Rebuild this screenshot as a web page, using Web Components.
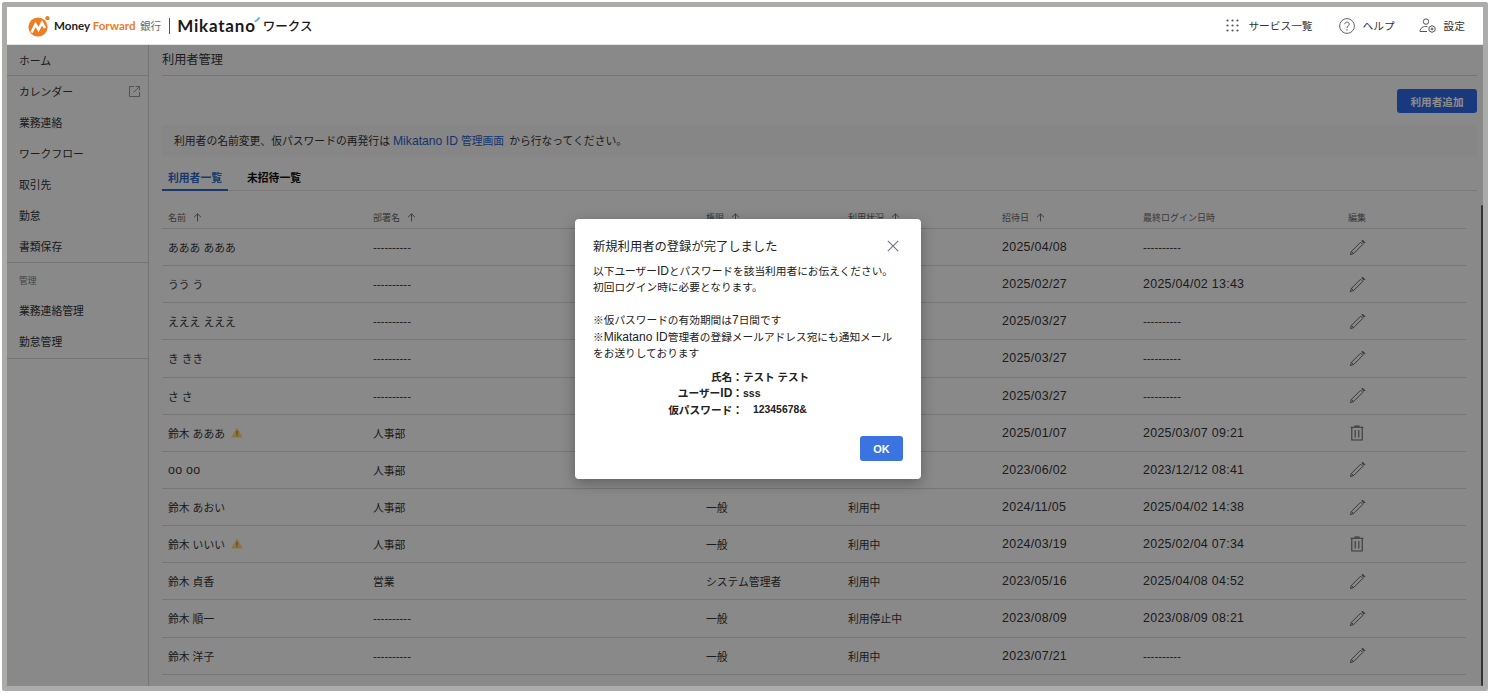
<!DOCTYPE html>
<html lang="ja">
<head>
<meta charset="utf-8">
<title>利用者管理</title>
<style>
  html, body { margin: 0; height: 100%; background: #fff; overflow: hidden; }
  body { font-family: "Liberation Sans", "Noto Sans CJK JP", sans-serif; font-size: 10.8px; color: #333; }
</style>
</head>
<body>
<app-frame>
  <app-header slot="header"></app-header>
  <side-nav slot="nav">
    <nav-group><nav-item>ホーム</nav-item></nav-group>
    <nav-group>
      <nav-item external>カレンダー</nav-item>
      <nav-item>業務連絡</nav-item>
      <nav-item>ワークフロー</nav-item>
      <nav-item>取引先</nav-item>
      <nav-item>勤怠</nav-item>
      <nav-item>書類保存</nav-item>
    </nav-group>
    <nav-group label="管理">
      <nav-item>業務連絡管理</nav-item>
      <nav-item>勤怠管理</nav-item>
    </nav-group>
  </side-nav>
  <users-page slot="main">
    <user-table>
      <user-row name="あああ あああ" dept="----------" invited="2025/04/08" login="----------"></user-row>
      <user-row name="うう う" dept="----------" invited="2025/02/27" login="2025/04/02 13:43"></user-row>
      <user-row name="えええ えええ" dept="----------" invited="2025/03/27" login="----------"></user-row>
      <user-row name="き きき" dept="----------" invited="2025/03/27" login="----------"></user-row>
      <user-row name="さ さ" dept="----------" invited="2025/03/27" login="----------"></user-row>
      <user-row name="鈴木 あああ" warn dept="人事部" invited="2025/01/07" login="2025/03/07 09:21" action="delete"></user-row>
      <user-row name="oo oo" dept="人事部" invited="2023/06/02" login="2023/12/12 08:41"></user-row>
      <user-row name="鈴木 あおい" dept="人事部" role="一般" status="利用中" invited="2024/11/05" login="2025/04/02 14:38"></user-row>
      <user-row name="鈴木 いいい" warn dept="人事部" role="一般" status="利用中" invited="2024/03/19" login="2025/02/04 07:34" action="delete"></user-row>
      <user-row name="鈴木 貞香" dept="営業" role="システム管理者" status="利用中" invited="2023/05/16" login="2025/04/08 04:52"></user-row>
      <user-row name="鈴木 順一" dept="----------" role="一般" status="利用停止中" invited="2023/08/09" login="2023/08/09 08:21"></user-row>
      <user-row name="鈴木 洋子" dept="----------" role="一般" status="利用中" invited="2023/07/21" login="----------"></user-row>
    </user-table>
  </users-page>
  <done-dialog slot="dialog"></done-dialog>
</app-frame>

<script>
// outer grey frame, header on top, everything below it sits under the backdrop
class AppFrame extends HTMLElement {
  constructor() {
    super()
    this.attachShadow({ mode: 'open' })
    this.shadowRoot.innerHTML = `
      <style>
        :host { display: block; box-sizing: border-box; width: 1486px; height: 689px; margin: 2px 0 0 2px;
                border: 5px solid #ababa9; border-radius: 2px; background: #fafafa; }
        .app { position: relative; display: flex; flex-direction: column; height: 100%; overflow: hidden; }
        .body { flex: 1; display: flex; min-height: 0; position: relative; }
        .backdrop { position: absolute; inset: 0; background: rgba(0, 0, 0, .45); }
      </style>
      <div class="app">
        <slot name="header"></slot>
        <div class="body">
          <slot name="nav"></slot>
          <slot name="main"></slot>
          <div class="backdrop"></div>
          <slot name="dialog"></slot>
        </div>
      </div>`
  }
}

class AppHeader extends HTMLElement {
  constructor() {
    super()
    this.attachShadow({ mode: 'open' })
    this.shadowRoot.innerHTML = `
      <style>
        :host { display: flex; align-items: center; box-sizing: border-box; height: 38px; background: #fff;
                border-bottom: 1px solid #e4e4e4; padding: 0 18px 0 21px; flex: none; }
        .logo { display: flex; align-items: center; flex: 1; }
        .mf { margin-left: 4px; font: 700 11.6px "Lato", "Liberation Sans", sans-serif; color: #222; white-space: nowrap; width: 82px; }
        .mf b { color: #ee7c22; font-weight: 700; }
        .bank { margin-left: 4px; color: #666; font-size: 10.6px; }
        .sep { width: 1px; height: 16px; background: #555; margin: 0 8px 0 8px; }
        .mika { font: 700 17px "Lato", "Liberation Sans", sans-serif; letter-spacing: .8px; margin-left: -1px; color: #1a1a1a; }
        .tick { margin: -12px 0 0 -2px; }
        .works { margin-left: 3px; font-size: 12.5px; color: #1a1a1a; font-weight: 500; }
        .link { display: flex; align-items: center; margin-left: 26px; color: #333; font-size: 10.7px; }
        .link svg { display: block; margin-right: 9px; }
        .link.help svg { margin-right: 8px; }
        .link.conf { margin-left: 24px; }
      </style>
      <div class="logo">
        <svg width="22" height="22" viewBox="0 0 22 22">
          <circle cx="10" cy="12" r="9.6" fill="#ee7c22"/>
          <circle cx="19.4" cy="3.2" r="2.1" fill="#ee7c22"/>
          <path d="M3.5 17.5 L7.5 9.5 L10.5 14.5 L14 8 L17 13" fill="none" stroke="#fff" stroke-width="2.6"/>
        </svg>
        <span class="mf">Money <b>Forward</b></span>
        <span class="bank">銀行</span>
        <span class="sep"></span>
        <span class="mika">Mikatano</span>
        <svg class="tick" width="6" height="5" viewBox="0 0 6 5"><path d="M.5 4.5 C2.5 4 4 2.5 5.5 .5" fill="none" stroke="#3fb2e8" stroke-width="1.6"/></svg>
        <span class="works">ワークス</span>
      </div>
      <div class="link">
        <svg width="13" height="13" viewBox="0 0 13 13" fill="#555">
          <circle cx="1.5" cy="1.5" r="1.1"/><circle cx="6.5" cy="1.5" r="1.1"/><circle cx="11.5" cy="1.5" r="1.1"/>
          <circle cx="1.5" cy="6.5" r="1.1"/><circle cx="6.5" cy="6.5" r="1.1"/><circle cx="11.5" cy="6.5" r="1.1"/>
          <circle cx="1.5" cy="11.5" r="1.1"/><circle cx="6.5" cy="11.5" r="1.1"/><circle cx="11.5" cy="11.5" r="1.1"/>
        </svg>
        <span>サービス一覧</span>
      </div>
      <div class="link help">
        <svg width="16" height="16" viewBox="0 0 16 16" fill="none" stroke="#555">
          <circle cx="8" cy="8" r="7.4" stroke-width=".9"/>
          <path d="M5.8 6.2 C5.8 3.4 10.2 3.4 10.2 6.2 C10.2 8 8 8 8 10" stroke-width="1"/>
          <circle cx="8" cy="12" r=".7" fill="#555" stroke="none"/>
        </svg>
        <span>ヘルプ</span>
      </div>
      <div class="link conf">
        <svg width="17" height="15" viewBox="0 0 17 15" fill="none" stroke="#555" stroke-width="1" style="margin-right:8px">
          <circle cx="7" cy="3.6" r="2.7"/>
          <path d="M8.5 8.6 C4 8 1 10 1 13.5 H8"/>
          <path d="M13 7.6 L16 9.3 V12.7 L13 14.4 L10 12.7 V9.3 Z"/>
          <circle cx="13" cy="11" r="1"/>
        </svg>
        <span>設定</span>
      </div>`
  }
}

class SideNav extends HTMLElement {
  constructor() {
    super()
    this.attachShadow({ mode: 'open' })
    this.shadowRoot.innerHTML = `
      <style>
        :host { display: block; box-sizing: border-box; width: 142px; flex: none; border-right: 1px solid #d4d4d4; }
      </style>
      <slot></slot>`
  }
}

class NavGroup extends HTMLElement {
  connectedCallback() {
    if (this.shadowRoot) return
    this.attachShadow({ mode: 'open' })
    const label = this.getAttribute('label')
    this.shadowRoot.innerHTML = `
      <style>
        :host { display: block; border-bottom: 1px solid #d4d4d4; }
        :host([label]) { padding-bottom: 1px; }
        .label { height: 32px; line-height: 36px; padding-left: 12px; font-size: 8.8px; color: #777; }
      </style>
      ${label ? `<div class="label">${label}</div>` : ''}
      <slot></slot>`
  }
}

class NavItem extends HTMLElement {
  connectedCallback() {
    if (this.shadowRoot) return
    this.attachShadow({ mode: 'open' })
    const ext = this.hasAttribute('external')
    this.shadowRoot.innerHTML = `
      <style>
        :host { display: flex; align-items: center; justify-content: space-between; height: 31px; box-sizing: border-box;
                padding: 0 8px 1px 12px; color: #333; }
        :host(:first-child:last-child) { height: 30px; padding-bottom: 0; }
        svg { display: block; }
      </style>
      <slot></slot>
      ${ext ? `<svg width="11" height="11" viewBox="0 0 11 11" fill="none" stroke="#8a8a8a" stroke-width=".9">
        <path d="M5 .5 H.5 V10.5 H10.5 V6 M6.5 .5 H10.5 V4.5 M10.3 .7 L4.5 6.5"/></svg>` : ''}`
  }
}

class UsersPage extends HTMLElement {
  constructor() {
    super()
    this.attachShadow({ mode: 'open' })
    this.shadowRoot.innerHTML = `
      <style>
        :host { display: block; flex: 1; min-width: 0; box-sizing: border-box; padding: 0 6px 0 13px; position: relative; overflow: hidden; }
        h1 { margin: 0; height: 31px; line-height: 31px; box-sizing: border-box; font-size: 12.2px; font-weight: 400;
             color: #333; border-bottom: 1px solid #d4d4d4; }
        .actions { display: flex; justify-content: flex-end; margin-top: 13px; }
        button { width: 80px; height: 24px; border: 0; border-radius: 3px; background: #2f69e5; color: #fff;
                 font: 700 10.6px "Liberation Sans", "Noto Sans CJK JP", sans-serif; padding: 0; }
        .notice { margin-top: 12px; height: 32px; line-height: 32px; padding-left: 12px; background: #f4f4f4; color: #333; border-radius: 2px; }
        .notice a { color: #2f5fc4; text-decoration: none; margin-right: 2px; }
        .l { font-size: 12.2px; }
        .tabs { display: flex; margin-top: 11px; height: 23px; box-sizing: border-box; border-bottom: 1px solid #dcdcdc; font-weight: 700; font-size: 10.8px; }
        .tab { padding: 0 6px; height: 23px; box-sizing: border-box; line-height: 20px; color: #111; margin-right: 6px; }
        .tab.on { width: 66px; color: #2f69c4; border-bottom: 2px solid #2f69c4; margin-right: 13px; }
        .thumb { position: absolute; right: 0; top: 160px; bottom: 0; width: 2px; background: #5e5e5e; border-radius: 1px; }
      </style>
      <h1>利用者管理</h1>
      <div class="actions"><button>利用者追加</button></div>
      <div class="notice">利用者の名前変更、仮パスワードの再発行は <a><span class="l">Mikatano ID</span> 管理画面</a> から行なってください。</div>
      <div class="tabs"><div class="tab on">利用者一覧</div><div class="tab">未招待一覧</div></div>
      <slot></slot>
      <div class="thumb"></div>`
  }
}

const COLS = '205px 333px 142px 154px 141px 205px 1fr'
const ARROW = `<svg width="9" height="9" viewBox="0 0 9 9" fill="none" stroke="#666" stroke-width=".9"><path d="M4.5 8.5 V1 M1 4.2 L4.5 .8 L8 4.2"/></svg>`

class UserTable extends HTMLElement {
  constructor() {
    super()
    this.attachShadow({ mode: 'open' })
    const head = ['名前', '部署名', '権限', '利用状況', '招待日']
      .map(t => `<span class="th">${t}${ARROW}</span>`).join('')
    this.shadowRoot.innerHTML = `
      <style>
        :host { display: block; margin-right: 11px; }
        .head { display: grid; grid-template-columns: ${COLS}; height: 38px; box-sizing: border-box; padding-top: 20px;
                border-bottom: 1px solid #d8d8d8; font-size: 9px; color: #666; }
        .th { display: flex; align-items: center; gap: 7px; height: 13px; padding-left: 6px; }
      </style>
      <div class="head">${head}<span class="th">最終ログイン日時</span><span class="th">編集</span></div>
      <slot></slot>`
  }
}

// latin runs come out wider in the reference than the CJK size gives
const widen = s => /^-+$/.test(s)
  ? `<span class="dash">${s}</span>`
  : s.replace(/[\x21-\x7e]+( [\x21-\x7e]+)*/g, m => `<span class="l">${m}</span>`)

class UserRow extends HTMLElement {
  connectedCallback() {
    if (this.shadowRoot) return
    this.attachShadow({ mode: 'open' })
    const a = n => widen(this.getAttribute(n) ?? '')
    const warn = this.hasAttribute('warn')
      ? `<svg class="warn" width="12" height="11" viewBox="0 0 12 11"><path d="M6 .3 L11.8 10.6 H.2 Z" fill="#ffd873"/><path d="M6 3.8 V7.4 M6 8.3 V9.4" stroke="#8a6a20" stroke-width="1"/></svg>`
      : ''
    const icon = this.getAttribute('action') === 'delete'
      ? `<svg width="16" height="16" viewBox="0 0 16 16" fill="none" stroke="#666" stroke-width="1.1"><path d="M1.6 2.2 H14.4 M6 2.2 V1 H10 V2.2 M2.8 2.2 V15 H13.2 V2.2 M6.2 5 V12.4 M9.8 5 V12.4"/></svg>`
      : `<svg width="17" height="17" viewBox="0 0 17 17" fill="none" stroke="#666" stroke-width="1"><path d="M1.4 15.6 L2.4 12.4 L11.6 3.2 L13.8 5.4 L4.6 14.6 Z M2.4 12.4 L4.6 14.6"/><path d="M12.8 2 L13.6 1.2 L15.8 3.4 L15 4.2 Z" fill="#666"/></svg>`
    this.shadowRoot.innerHTML = `
      <style>
        :host { display: grid; grid-template-columns: ${COLS}; align-items: center; height: 37.15px; box-sizing: border-box;
                border-bottom: 1px solid #d8d8d8; color: #333; }
        span, div { padding-left: 6px; }
        span span { padding-left: 0; }
        .name { display: flex; align-items: center; white-space: pre; }
        .name span { padding-left: 0; }
        .warn { margin-left: 6px; margin-top: -1px; }
        .edit { display: flex; padding-left: 7px; }
        .l { font-size: 12.4px; letter-spacing: .3px; }
        .dash { font-size: 11.4px; }
      </style>
      <div class="name">${a('name')}${warn}</div>
      <span>${a('dept')}</span><span>${a('role')}</span><span>${a('status')}</span>
      <span>${a('invited')}</span><span>${a('login')}</span>
      <div class="edit">${icon}</div>`
  }
}

class DoneDialog extends HTMLElement {
  constructor() {
    super()
    this.attachShadow({ mode: 'open' })
    this.shadowRoot.innerHTML = `
      <style>
        :host { position: absolute; left: 568px; top: 174px; width: 346px; height: 260px; box-sizing: border-box; padding: 0 18px;
                background: #fff; border-radius: 4px; box-shadow: 0 4px 14px rgba(0, 0, 0, .3); display: flex; flex-direction: column; color: #333; }
        .top { display: flex; justify-content: space-between; align-items: center; height: 54px; box-sizing: border-box; padding: 0 4px 0 0; flex: none; }
        h2 { margin: 0; font-size: 12.3px; font-weight: 400; color: #222; }
        p { margin: -10px 0 0; font-size: 10.7px; line-height: 16.4px; color: #222; }
        .l { font-size: 12px; }
        .creds { display: grid; grid-template-columns: 150px auto; justify-content: start; margin-top: 7.5px; font-size: 10.5px; line-height: 16.4px; font-weight: 700; color: #222; }
        .creds dt { text-align: right; font-size: 10.7px; } .creds dd { margin: 0; }
        .pw { padding-left: 10px; font-size: 10.4px; }
        .foot { margin-top: auto; padding-bottom: 18px; display: flex; justify-content: flex-end; }
        button { width: 43px; height: 25px; border: 0; border-radius: 3px; background: #3b74e0; color: #fff; padding: 0;
                 font: 700 11px "Liberation Sans", "Noto Sans CJK JP", sans-serif; }
        dl { margin: 0; }
      </style>
      <div class="top">
        <h2>新規利用者の登録が完了しました</h2>
        <svg width="12" height="12" viewBox="0 0 12 12" stroke="#6d7480" stroke-width="1.1"><path d="M.8 .8 L11.2 11.2 M11.2 .8 L.8 11.2"/></svg>
      </div>
      <p>以下ユーザー<span class="l">ID</span>とパスワードを該当利用者にお伝えください。<br>初回ログイン時に必要となります。<br><br>※仮パスワードの有効期間は<span class="l">7</span>日間です<br>※<span class="l">Mikatano ID</span>管理者の登録メールアドレス宛にも通知メール<br>をお送りしております</p>
      <dl class="creds">
        <dt>氏名：</dt><dd>テスト テスト</dd>
        <dt>ユーザー<span class="l">ID</span>：</dt><dd>sss</dd>
        <dt>仮パスワード：</dt><dd class="pw">12345678&amp;</dd>
      </dl>
      <div class="foot"><button>OK</button></div>`
  }
}

customElements.define('app-frame', AppFrame)
customElements.define('app-header', AppHeader)
customElements.define('side-nav', SideNav)
customElements.define('nav-group', NavGroup)
customElements.define('nav-item', NavItem)
customElements.define('users-page', UsersPage)
customElements.define('user-table', UserTable)
customElements.define('user-row', UserRow)
customElements.define('done-dialog', DoneDialog)
</script>
</body>
</html>
